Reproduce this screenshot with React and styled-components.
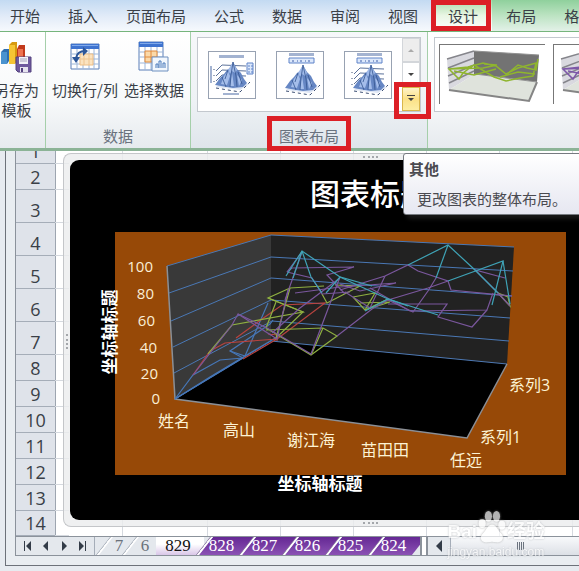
import React from "react";
import styled, { createGlobalStyle } from "styled-components";

const menuTabs = ["开始", "插入", "页面布局", "公式", "数据", "审阅", "视图"];
const chartTabs = ["设计", "布局", "格式"];

const rows = [
  { no: 1, height: 13 },
  { no: 2, height: 26 },
  { no: 3, height: 33 },
  { no: 4, height: 33 },
  { no: 5, height: 33 },
  { no: 6, height: 33 },
  { no: 7, height: 33 },
  { no: 8, height: 26 },
  { no: 9, height: 26 },
  { no: 10, height: 26 },
  { no: 11, height: 26 },
  { no: 12, height: 26 },
  { no: 13, height: 26 },
  { no: 14, height: 25 },
];

const gridLines = [
  "167,266 271,235 514,247",
  "169,293 271,257 513,271",
  "171,321 271,278 512,296",
  "173,347 271,300 510,318",
  "174,373 272,321 509,341",
  "175,399 271,341 507,364",
];

const series = [
  {
    color: "#4677b8",
    lines: [
      "175,399 193,375 220,360 243,358 175,399",
      "243,358 230,351 270,324 273,320",
      "230,351 245,356 268,303",
      "175,399 210,377 245,356 277,337",
    ],
  },
  {
    color: "#b8433f",
    lines: [
      "193,375 210,351 225,343 277,339 243,359",
      "236,338 262,319 282,305 325,303 277,339",
      "268,334 277,335 277,341",
    ],
  },
  {
    color: "#8fb041",
    lines: [
      "208,354 232,325 303,312 268,298 290,288 324,286",
      "268,298 303,312 276,338 290,288",
      "266,330 323,328 337,336 311,355 266,328 276,302",
      "323,328 312,353",
      "322,294 327,303 360,286 335,285",
      "353,297 375,293 365,310 353,297",
      "360,303 390,302 365,310 388,299",
      "498,293 510,306 508,297 498,293",
    ],
  },
  {
    color: "#7a579d",
    lines: [
      "193,375 232,325 238,314 267,328 311,354 340,277",
      "238,314 277,339 288,290",
      "287,272 292,268 354,267 327,275 345,294",
      "287,272 312,278 322,294 350,292",
      "285,300 302,252 287,272",
      "295,293 340,287 396,283 360,291 340,284",
      "272,333 300,308 340,278",
      "337,336 372,309 388,300 428,288 448,281",
      "340,290 385,276 408,265 418,271 448,281 451,290 512,296",
      "385,276 370,308 345,292",
      "370,288 410,311 487,310 493,293",
      "388,304 447,304 438,317 472,327 487,310",
      "436,278 428,291 413,312 388,300",
      "475,270 505,278 475,270 498,293 510,306",
    ],
  },
  {
    color: "#3fa3b6",
    lines: [
      "286,276 302,251 340,277 355,284 388,299 438,315",
      "302,251 311,277 322,293",
      "302,251 293,278",
      "326,293 340,277 372,286",
      "365,311 388,299 408,306",
      "408,265 448,245 475,270 498,293",
      "448,245 436,278",
      "448,281 503,261 492,305",
      "503,261 510,304",
    ],
  },
];

const valueLabels = [
  { text: "100", x: 153, y: 272 },
  { text: "80", x: 154, y: 299 },
  { text: "60", x: 155, y: 326 },
  { text: "40", x: 157, y: 353 },
  { text: "20", x: 158, y: 379 },
  { text: "0", x: 160, y: 404 },
];

const categoryLabels = [
  { text: "姓名", x: 158, y: 427 },
  { text: "高山", x: 223, y: 436 },
  { text: "谢江海", x: 287, y: 446 },
  { text: "苗田田", x: 361, y: 456 },
  { text: "任远", x: 450, y: 466 },
  { text: "系列1", x: 480, y: 443 },
  { text: "系列3", x: 509, y: 391 },
];

const SaveTemplateIcon = () => (
  <svg width="34" height="34" viewBox="0 0 34 34">
    <path d="M2 12l3-3h5v12l-2 3H2z" fill="#2f6fb0" />
    <path d="M2 12h6v12H2z" fill="#4a93cf" />
    <path d="M10 5l3-3h5v20l-2 2h-6z" fill="#d79a10" />
    <path d="M10 5h6v19h-6z" fill="#f6c534" />
    <path d="M18 9l2-4h6v14h-8z" fill="#c23a1c" />
    <path d="M19 9h5v12h-5z" fill="#ee7350" />
    <path d="M17 17h15v15H19l-2-2z" fill="#6f5a9e" stroke="#54427f" />
    <path d="M20 17h9v7h-9z" fill="#f3f3f8" />
    <path d="M21 19h7M21 21h7" stroke="#a7a3bd" />
    <path d="M21 27h8v5h-8z" fill="#e6e4ef" />
    <path d="M22 28h2v4h-2z" fill="#54427f" />
  </svg>
);

const SheetGrid = () => (
  <>
    <path d="M3 4h28v25H3z" fill="#fff" stroke="#5b7fb8" />
    <path d="M3 4h28v5H3z" fill="#3e73cf" />
    <path d="M4 5h26v1H4z" fill="#7fa9ea" />
    <path
      d="M3 14h28M3 19h28M3 24h28M9 9v20M15 9v20M21 9v20M26 9v20"
      stroke="#9db6d8"
      fill="none"
    />
  </>
);

const SwitchIcon = () => (
  <svg width="34" height="34" viewBox="0 0 34 34">
    <SheetGrid />
    <path d="M12 14h13v11H12z" fill="#fbe3c0" stroke="#ecbd85" />
    <path d="M12 19h13M16 14v11M21 14v11" stroke="#eec48f" />
    <path d="M8 18c1-5 4-7 9-7" fill="none" stroke="#2c5698" strokeWidth="2" />
    <path d="M15 7l5 4-5 5zM4 17h8l-4 6z" fill="#2c5698" />
  </svg>
);

const SelectDataIcon = () => (
  <svg width="34" height="34" viewBox="0 0 34 34">
    <g transform="translate(-1 -2)">
      <path d="M3 4h24v28H3z" fill="#fff" stroke="#5b7fb8" />
      <path d="M3 4h24v5H3z" fill="#3e73cf" />
      <path d="M4 5h22v1H4z" fill="#7fa9ea" />
      <path d="M3 14h24M3 19h24M3 25h24M9 9v23M15 9v23M21 9v23" stroke="#9db6d8" />
      <path d="M9 13h12v11H9z" fill="#fbd9a8" stroke="#e08a3c" />
      <path d="M9 19h12M15 13v11" stroke="#e08a3c" />
    </g>
    <path d="M15 17h16v14H15z" fill="#f2f7fd" stroke="#6d8fbf" />
    <path d="M19 28v-4h2v4M22 28v-7h2v7M26 28v-5h2v5" fill="none" stroke="#4b7abb" />
  </svg>
);

// side: legend on the right and an axis title, grid: back wall lines
const LayoutPreview = ({ side, grid }) => (
  <svg width="46" height="46" viewBox="0 0 46 46">
    {side ? (
      <>
        <path d="M10 3h25v3H10zM14 41h16v2H14zM1 14h2v17H1z" fill="#a3b3d1" />
        <path d="M38 11h6v11h-6z" fill="#dce8fb" stroke="#5f83c8" />
        <path d="M40 13v8M43 13v8" stroke="#5f83c8" strokeDasharray="2 1" />
      </>
    ) : (
      <>
        <path d="M12 1h25v3H12z" fill="#a3b3d1" />
        <path d="M12 6h25v5H12z" fill="#dce8fb" stroke="#5f83c8" />
        <path d="M15 9h20" stroke="#3f5fa8" strokeDasharray="2 3 1 2" />
      </>
    )}
    <g transform={side ? undefined : "translate(2 3)"}>
      {grid && (
        <path
          d="M7 19l6-6 24 1M7 24l6-6 24 1M7 29l6-6 24 1"
          fill="none"
          stroke="#4a628f"
          strokeWidth="0.9"
        />
      )}
      <path d="M7 35l6-5 27 2-9 6z" fill="#dde5f4" />
      <path d="M6 33l5-7 4-4 3-4 3-2 3-6 4 7 4 4 3 6 3 4-4 4-10 1z" fill="#6687c4" />
      <path d="M19 18l5-8 4 8-2 3-3-2-2 3z" fill="#9fb9e8" />
      <path d="M15 24l4-5 2 5-3 9-6-1zM23 20l2 14h-4zM28 23l5 5-3 6z" fill="#a4bdea" />
      <path
        d="M24 10l-2 13-1 12M24 10l3 14 1 11M13 25l4 10M19 18l-3 9M29 20l4 12"
        fill="none"
        stroke="#35558f"
        strokeWidth="0.8"
      />
      {grid && <path d="M5 17v18" stroke="#3b4e73" strokeDasharray="1 5" />}
      <path d="M7 36l24 4 10-10" fill="none" stroke="#3b4e73" strokeDasharray="3 3" />
    </g>
  </svg>
);

const StylePreview = ({ color }) => (
  <svg width="104" height="58" viewBox="0 0 104 58">
    <path d="M7 13l28-8v23L9 44z" fill="#d9d9df" />
    <path d="M34 5l65 4-2 27-63-8z" fill="#737373" />
    <path d="M9 44l26-16 62 8-8 19z" fill="#dfe3dc" />
    <path d="M9 44l80 11 8-19" fill="none" stroke="#858585" strokeWidth="2" />
    <path d="M7 13l27-8M8 22l26-10M8 30l26-11M9 37l25-12" stroke="#85858b" strokeWidth="1.5" />
    <path d="M34 5l65 4M35 28l62 8" stroke="#929292" fill="none" />
    <path
      d="M9 23l19-2 15-4 13 3 10 8 12-6 18-5-3 13-13 2-14 3-12-4-20-12-11 8-4 6zM9 23l34-1 14-3-13-1M14 25l20 4 22-6M66 29l12-10 9 3 9 2 2-11M60 31l18-5 17 2"
      fill="none"
      stroke={color}
      strokeWidth="1.5"
    />
  </svg>
);

const ChartDrawing = () => (
  <ChartSvg viewBox="96 232 470 264">
    <rect x="115" y="232" width="451" height="243" fill="#974907" />
    <path d="M167 266L271 235V341L175 399z" fill="#393939" />
    <path d="M271 235L514 247 507 364 271 341z" fill="#222" />
    <path d="M175 399L271 341 507 364 467 438z" fill="#000" />
    {gridLines.map((points) => (
      <polyline key={points} points={points} fill="none" stroke="#4a78b5" />
    ))}
    <path d="M167 266L175 399 467 438 507 364" fill="none" stroke="#8a8f96" strokeWidth="1.5" />
    {series.map((item) =>
      item.lines.map((points) => (
        <polyline
          key={points}
          points={points}
          fill="none"
          stroke={item.color}
          strokeWidth="1.2"
        />
      ))
    )}
    {valueLabels.map((label) => (
      <ValueText key={label.text} x={label.x} y={label.y}>
        {label.text}
      </ValueText>
    ))}
    {categoryLabels.map((label) => (
      <CategoryText key={label.text} x={label.x} y={label.y}>
        {label.text}
      </CategoryText>
    ))}
    <AxisTitle x="320" y="490">
      坐标轴标题
    </AxisTitle>
    <AxisTitle transform="translate(116 332) rotate(-90)">坐标轴标题</AxisTitle>
  </ChartSvg>
);

function App() {
  return (
    <Page>
      <GlobalStyle />
      <TabBar>
        {menuTabs.map((tab) => (
          <MenuTab key={tab}>{tab}</MenuTab>
        ))}
        <ChartTabs>
          {chartTabs.map((tab) => (
            <MenuTab key={tab} $active={tab === "设计"}>
              {tab}
            </MenuTab>
          ))}
        </ChartTabs>
      </TabBar>

      <Ribbon>
        <TypeGroup>
          <Tools>
            <ToolButton>
              <SaveTemplateIcon />
              <span>
                另存为
                <br />
                模板
              </span>
            </ToolButton>
          </Tools>
        </TypeGroup>
        <DataGroup>
          <Tools>
            <ToolButton>
              <SwitchIcon />
              <span>切换行/列</span>
            </ToolButton>
            <ToolButton>
              <SelectDataIcon />
              <span>选择数据</span>
            </ToolButton>
          </Tools>
          <GroupLabel>数据</GroupLabel>
        </DataGroup>
        <LayoutGroup>
          <Gallery>
            <Previews>
              <Preview aria-label="布局 1">
                <LayoutPreview side grid />
              </Preview>
              <Preview aria-label="布局 2">
                <LayoutPreview />
              </Preview>
              <Preview aria-label="布局 3">
                <LayoutPreview grid />
              </Preview>
            </Previews>
            <GalleryScroll>
              <ScrollButton disabled aria-label="向上">
                <svg width="8" height="5">
                  <path d="M1 4l3-3 3 3z" fill="#aaa" />
                </svg>
              </ScrollButton>
              <ScrollButton aria-label="向下">
                <svg width="8" height="5">
                  <path d="M1 1l3 3 3-3z" fill="#444" />
                </svg>
              </ScrollButton>
              <MoreButton aria-label="其他">
                <svg width="8" height="8">
                  <path d="M0 0h8v1H0zM1 3l3 3 3-3z" fill="#444" />
                </svg>
              </MoreButton>
              <Tooltip role="tooltip">
                <strong>其他</strong>
                <p>更改图表的整体布局。</p>
              </Tooltip>
            </GalleryScroll>
          </Gallery>
          <GroupLabel>
            <MarkedLabel>图表布局</MarkedLabel>
          </GroupLabel>
        </LayoutGroup>
        <StyleGroup>
          <StyleGallery>
            <StyleThumb aria-label="样式 1">
              <StylePreview color="#8fb52e" />
            </StyleThumb>
            <StyleThumb aria-label="样式 2">
              <StylePreview color="#7d57a8" />
            </StyleThumb>
          </StyleGallery>
        </StyleGroup>
      </Ribbon>

      <Workbook>
        <Sheet>
          <RowHeaders>
            {rows.map((row) => (
              <RowHeader key={row.no} $height={row.height}>
                {row.no}
              </RowHeader>
            ))}
          </RowHeaders>
          <Cells>
            <ChartFrame>
              <ChartArea>
                <ChartTitle>图表标题</ChartTitle>
                <ChartDrawing />
              </ChartArea>
            </ChartFrame>
          </Cells>
        </Sheet>
        <BottomBar>
          <SheetNav>
            <NavButton aria-label="第一张">
              <svg width="9" height="10">
                <path d="M1 0h1v10H1zM8 0v10L3 5z" fill="#333c48" />
              </svg>
            </NavButton>
            <NavButton aria-label="上一张">
              <svg width="9" height="10">
                <path d="M7 0v10L2 5z" fill="#333c48" />
              </svg>
            </NavButton>
            <NavButton aria-label="下一张">
              <svg width="9" height="10">
                <path d="M2 0v10l5-5z" fill="#333c48" />
              </svg>
            </NavButton>
            <NavButton aria-label="最后一张">
              <svg width="9" height="10">
                <path d="M7 0h1v10H7zM1 0v10l5-5z" fill="#333c48" />
              </svg>
            </NavButton>
          </SheetNav>
          <SheetTabs>
            <PlainTab>7</PlainTab>
            <PlainTab>6</PlainTab>
            <CurrentTab>829</CurrentTab>
            {["828", "827", "826", "825", "824"].map((name) => (
              <PurpleTab key={name}>{name}</PurpleTab>
            ))}
          </SheetTabs>
          <SplitHandle />
          <ScrollLeft aria-label="向左滚动">
            <svg width="8" height="12">
              <path d="M7 0v12L1 6z" fill="#333c48" />
            </svg>
          </ScrollLeft>
          <ScrollThumb>
            <svg width="8" height="8">
              <path d="M0 0h1v8H0zM2 0h1v8H2zM4 0h1v8H4zM6 0h1v8H6z" fill="#6c747f" />
            </svg>
          </ScrollThumb>
        </BottomBar>
        <Watermark>
          <WatermarkLogo>
            <span>Bai</span>
            <svg width="30" height="34" viewBox="0 0 30 38">
              <ellipse cx="11" cy="6" rx="4" ry="6" />
              <ellipse cx="20" cy="6" rx="4" ry="6" />
              <ellipse cx="4" cy="14" rx="4" ry="5" />
              <ellipse cx="26" cy="16" rx="4" ry="5" />
              <path d="M15 15c5 0 6 6 10 10 5 5 1 11-5 10-4-1-6-1-10 0-7 1-10-5-5-10 4-4 5-10 10-10z" />
            </svg>
            <span>经验</span>
          </WatermarkLogo>
          <small>jingyan.baidu.com</small>
        </Watermark>
      </Workbook>
    </Page>
  );
}

const GlobalStyle = createGlobalStyle`
  * {
    box-sizing: border-box;
  }
  body {
    margin: 0;
    background-color: #e7ebf0;
    font-family: "Noto Sans CJK SC", sans-serif;
    color: #3a3f47;
  }
  button {
    margin: 0;
    padding: 0;
    border: none;
    background: none;
    font: inherit;
    color: inherit;
  }
  svg {
    display: block;
    flex-shrink: 0;
  }
`;

const Page = styled.div`
  width: 100%;
  min-height: 100vh;
  overflow: hidden;
`;

const TabBar = styled.nav`
  display: flex;
  height: 32px;
  margin-left: -4px;
  border-bottom: 1px solid #76b57c;
  background: linear-gradient(#c3daf2, #e3ecf8 55%, #f6f9fd);
`;

const ChartTabs = styled.div`
  display: flex;
  flex: 1;
  margin-left: 2px;
  background: linear-gradient(#8fd09c, #bce3c2 50%, #e3f1e8);
`;

const MenuTab = styled.button`
  position: relative;
  flex-shrink: 0;
  padding: 1px 14px 0;
  font-size: 15px;
  line-height: 28px;
  background: ${(props) =>
    props.$active ? "linear-gradient(#a9dba9, #e9f6e4 50%, #fff)" : "none"};
  &::after {
    content: "";
    display: ${(props) => (props.$active ? "block" : "none")};
    position: absolute;
    inset: 0 1px 0 -3px;
    border: 5px solid #dc1f26;
  }
`;

const Ribbon = styled.div`
  display: flex;
  position: relative;
  z-index: 2;
  height: 119px;
  border-bottom: 3px solid #8bb396;
  background: linear-gradient(#fff, #f7f9fa 60%, #e6eaee);
`;

const Group = styled.section`
  display: flex;
  flex-direction: column;
  justify-content: space-between;
  flex-shrink: 0;
  border-right: 1px solid #a5cfaa;
`;

const TypeGroup = styled(Group)`
  align-items: flex-end;
  width: 46px;
  padding-right: 6px;
`;

const DataGroup = styled(Group)`
  width: 145px;
  align-items: center;
`;

const LayoutGroup = styled(Group)`
  width: 237px;
  padding: 5px 6px 0;
  background: linear-gradient(#f6f8fa, #eef2f5 60%, #dfe5eb);
`;

const StyleGroup = styled(Group)`
  flex: 1;
  padding: 5px 0 0 6px;
`;

const Tools = styled.div`
  display: flex;
  gap: 6px;
  padding-top: 8px;
`;

const ToolButton = styled.button`
  display: flex;
  flex-direction: column;
  align-items: center;
  gap: 6px;
  font-size: 15px;
  line-height: 20px;
  white-space: nowrap;
`;

const GroupLabel = styled.div`
  font-size: 15px;
  line-height: 24px;
  text-align: center;
  color: #69727e;
`;

const MarkedLabel = styled.span`
  position: relative;
  &::after {
    content: "";
    position: absolute;
    inset: -9px -12px -5px;
    border: 5px solid #dc1f26;
  }
`;

const Gallery = styled.div`
  display: flex;
  height: 75px;
  border: 1px solid #c3c8ce;
  background-color: #fff;
`;

const Previews = styled.div`
  display: flex;
  flex: 1;
  gap: 20px;
  align-items: center;
  padding-left: 10px;
`;

const Preview = styled.button`
  width: 48px;
  height: 48px;
  border: 1px solid #98a2b2;
`;

const GalleryScroll = styled.div`
  position: relative;
  display: flex;
  flex-direction: column;
  width: 18px;
`;

const ScrollButton = styled.button`
  display: flex;
  flex: 1;
  align-items: center;
  justify-content: center;
  border: 1px solid #d3d6da;
  background-color: ${(props) => (props.disabled ? "#ededed" : "#fff")};
`;

const MoreButton = styled(ScrollButton)`
  position: relative;
  border-color: #d9b64b;
  background: linear-gradient(#fdf3c9, #fbe187 50%, #fdeea4);
  &::after {
    content: "";
    position: absolute;
    inset: -6px -12px -9px -9px;
    border: 5px solid #dc1f26;
  }
`;

const Tooltip = styled.div`
  position: absolute;
  top: 115px;
  left: 1px;
  width: 200px;
  padding: 5px 5px 5px;
  border: 1px solid #767a80;
  border-radius: 3px;
  background: linear-gradient(#fff, #e6e7f1);
  box-shadow: 4px 4px 4px rgba(40, 40, 40, 0.6);
  font-size: 15px;
  line-height: 20px;
  color: #4a4a50;
  p {
    margin: 10px 0 0 8px;
  }
`;

const StyleGallery = styled.div`
  display: flex;
  gap: 8px;
  height: 75px;
  padding: 6px 0 0 4px;
  overflow: hidden;
  border: 1px solid #c3c8ce;
  background-color: #fff;
`;

const StyleThumb = styled.button`
  flex-shrink: 0;
  width: 106px;
  height: 60px;
  border-top: 1px solid #777;
  border-left: 1px solid #777;
`;

const Workbook = styled.main`
  position: relative;
  margin-left: 5px;
  padding: 0 0 9px 9px;
  border-left: 1px solid #6d727a;
  border-bottom: 1px solid #6d727a;
  background-color: #e9edf1;
`;

const Sheet = styled.div`
  display: flex;
  border-left: 1px solid #8b929b;
`;

const RowHeaders = styled.ol`
  width: 40px;
  margin: 0;
  padding: 0;
  list-style: none;
  background-color: #dfe3ea;
`;

const RowHeader = styled.li`
  position: relative;
  display: flex;
  align-items: flex-end;
  justify-content: center;
  height: ${(props) => props.$height}px;
  border-right: 1px solid #9da5b0;
  border-bottom: 1px solid #a5adb8;
  font-family: "Open Sans", sans-serif;
  font-size: 18px;
  line-height: 24px;
  &::after {
    content: "";
    position: absolute;
    left: 100%;
    bottom: -1px;
    width: 14px;
    height: 1px;
    background-color: #d5d9df;
  }
`;

const Cells = styled.div`
  flex: 1;
  min-width: 0;
  padding: 2px 0 9px 7px;
  background: repeating-linear-gradient(
      90deg,
      transparent 0 72px,
      #d5d9df 72px 73px
    )
    79px 0 #fff;
`;

const ChartFrame = styled.div`
  position: relative;
  padding: 6px 0 6px 6px;
  border: 1px solid #c4c6c9;
  border-right: none;
  border-radius: 8px 0 0 8px;
  background-color: rgba(235, 236, 238, 0.8);
  &::before,
  &::after {
    content: "";
    position: absolute;
  }
  /* drag grips on the top, bottom and left edges */
  &::before {
    inset: 2px auto 2px 299px;
    width: 15px;
    border: dotted #a4a7ab;
    border-width: 2px 0;
  }
  &::after {
    top: 180px;
    left: 2px;
    height: 15px;
    border-left: 2px dotted #a4a7ab;
  }
`;

const ChartArea = styled.div`
  position: relative;
  padding: 10px 0 24px 26px;
  overflow: hidden;
  border-radius: 9px 0 0 9px;
  background-color: #000;
`;

const ChartTitle = styled.h2`
  margin: 0 0 18px 214px;
  font-size: 30px;
  font-weight: 500;
  line-height: 44px;
  color: #fff;
`;

const ChartSvg = styled.svg`
  width: 470px;
  height: 264px;
`;

const ValueText = styled.text`
  font-family: "Open Sans", sans-serif;
  font-size: 15px;
  text-anchor: end;
  fill: #fbeed6;
`;

const CategoryText = styled.text`
  font-family: "Open Sans", "Noto Sans CJK SC", sans-serif;
  font-size: 16px;
  fill: #fdf3d4;
`;

const AxisTitle = styled.text`
  font-size: 17px;
  font-weight: 700;
  text-anchor: middle;
  fill: #fff;
`;

const BottomBar = styled.div`
  display: flex;
  height: 20px;
  border: 1px solid #8b929b;
  border-right: none;
  background-color: #e4e8ed;
`;

const SheetNav = styled.div`
  display: flex;
  justify-content: space-around;
  width: 79px;
  padding: 0 2px;
  border-right: 1px solid #a5adb8;
`;

const NavButton = styled.button`
  display: flex;
  align-items: center;
  justify-content: center;
  width: 18px;
`;

const SheetTabs = styled.div`
  display: flex;
  width: 325px;
  overflow: hidden;
  font-family: "Liberation Serif", serif;
  font-size: 17px;
  line-height: 18px;
`;

const SheetTab = styled.button`
  position: relative;
  z-index: 0;
  flex-shrink: 0;
  &::before {
    content: "";
    position: absolute;
    z-index: -1;
    inset: 0;
    transform: skewX(-38deg);
  }
`;

const PlainTab = styled(SheetTab)`
  width: 26px;
  margin-left: 9px;
  padding-left: 4px;
  color: #6b727b;
  & + & {
    margin-left: 0;
  }
  &::before {
    border-left: 2px solid #fff;
    box-shadow: -1px 0 #a5adb8;
  }
`;

const CurrentTab = styled(SheetTab)`
  width: 48px;
  padding-right: 4px;
  background: linear-gradient(#fff 40%, #d9c6e8);
  color: #111;
`;

const PurpleTab = styled(SheetTab)`
  width: 43px;
  padding-right: 8px;
  color: #fff;
  &::before {
    border-left: 2px solid #fff;
    background: linear-gradient(#652894, #8b52b4);
    box-shadow: -1px 0 #8b7aa0;
  }
`;

const SplitHandle = styled.div`
  width: 8px;
  border: 2px solid #8b929b;
  border-width: 0 2px;
  background-color: #fff;
`;

const ScrollLeft = styled.button`
  display: flex;
  align-items: center;
  justify-content: center;
  width: 22px;
`;

const ScrollThumb = styled.div`
  display: flex;
  flex: 1;
  align-items: center;
  padding-left: 66px;
  border-left: 1px solid #a5adb8;
  background: linear-gradient(#f8f9fb, #dce0e6);
`;

const Watermark = styled.div`
  position: absolute;
  right: 34px;
  bottom: 6px;
  color: #fff;
  opacity: 0.7;
  text-shadow: 0 0 2px #a0a4aa;
  font-family: "Liberation Sans", "Noto Sans CJK SC", sans-serif;
  small {
    display: block;
    font-size: 12px;
    line-height: 14px;
  }
`;

const WatermarkLogo = styled.div`
  display: flex;
  align-items: flex-end;
  font-size: 19px;
  font-weight: 700;
  line-height: 26px;
  svg {
    fill: #fff;
    filter: drop-shadow(0 0 1px #999);
  }
`;

export default App;
